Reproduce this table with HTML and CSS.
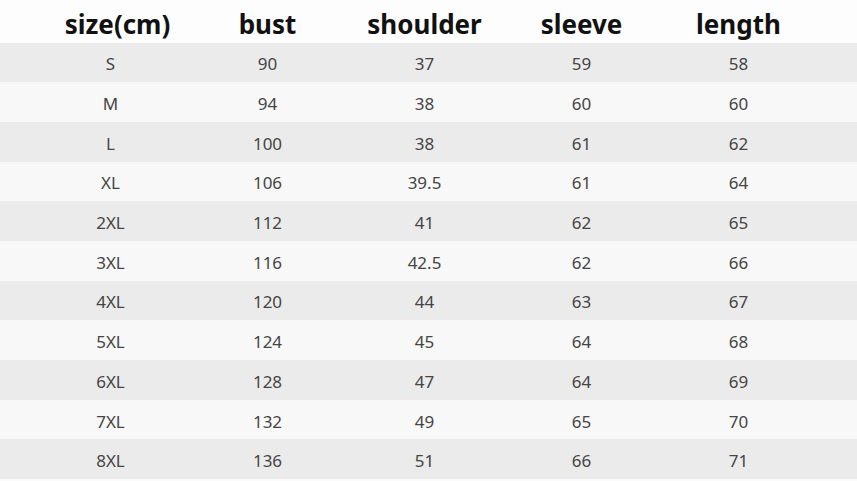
FILE: index.html
```html
<!DOCTYPE html>
<html>
<head>
<meta charset="utf-8">
<link rel="stylesheet" href="styles.css">
</head>
<body>
<div class="chart">
  <div class="row head">
    <div class="cell c1">size(cm)</div><div class="cell">bust</div><div class="cell">shoulder</div><div class="cell">sleeve</div><div class="cell">length</div>
  </div>
  <div class="row odd"><div class="cell">S</div><div class="cell">90</div><div class="cell">37</div><div class="cell">59</div><div class="cell">58</div></div>
  <div class="row even"><div class="cell">M</div><div class="cell">94</div><div class="cell">38</div><div class="cell">60</div><div class="cell">60</div></div>
  <div class="row odd"><div class="cell">L</div><div class="cell">100</div><div class="cell">38</div><div class="cell">61</div><div class="cell">62</div></div>
  <div class="row even"><div class="cell">XL</div><div class="cell">106</div><div class="cell">39.5</div><div class="cell">61</div><div class="cell">64</div></div>
  <div class="row odd"><div class="cell">2XL</div><div class="cell">112</div><div class="cell">41</div><div class="cell">62</div><div class="cell">65</div></div>
  <div class="row even"><div class="cell">3XL</div><div class="cell">116</div><div class="cell">42.5</div><div class="cell">62</div><div class="cell">66</div></div>
  <div class="row odd"><div class="cell">4XL</div><div class="cell">120</div><div class="cell">44</div><div class="cell">63</div><div class="cell">67</div></div>
  <div class="row even"><div class="cell">5XL</div><div class="cell">124</div><div class="cell">45</div><div class="cell">64</div><div class="cell">68</div></div>
  <div class="row odd"><div class="cell">6XL</div><div class="cell">128</div><div class="cell">47</div><div class="cell">64</div><div class="cell">69</div></div>
  <div class="row even"><div class="cell">7XL</div><div class="cell">132</div><div class="cell">49</div><div class="cell">65</div><div class="cell">70</div></div>
  <div class="row odd"><div class="cell">8XL</div><div class="cell">136</div><div class="cell">51</div><div class="cell">66</div><div class="cell">71</div></div>
</div>
</body>
</html>
```
FILE: styles.css
```css
html, body {
  margin: 0;
  padding: 0;
  background: #fbfbfb;
}
body {
  width: 857px;
  height: 481px;
  overflow: hidden;
  font-family: "Noto Sans", "Open Sans", sans-serif;
}
.chart {
  display: flex;
  flex-direction: column;
}
.row {
  display: grid;
  grid-template-columns: repeat(5, 157px);
  padding-left: 32px;
  height: 39.7px;
  align-items: center;
}
.head {
  height: 42.5px;
  background: #fdfdfd;
}
.head .cell {
  font-size: 26px;
  font-weight: 700;
  color: #111;
  padding-top: 5px;
}
.head .c1 {
  position: relative;
  left: 7px;
}
.cell {
  text-align: center;
  font-size: 17px;
  color: #454545;
  padding-top: 3px;
}
.odd {
  background: #ebebeb;
}
.even {
  background: #f8f8f8;
}
```
